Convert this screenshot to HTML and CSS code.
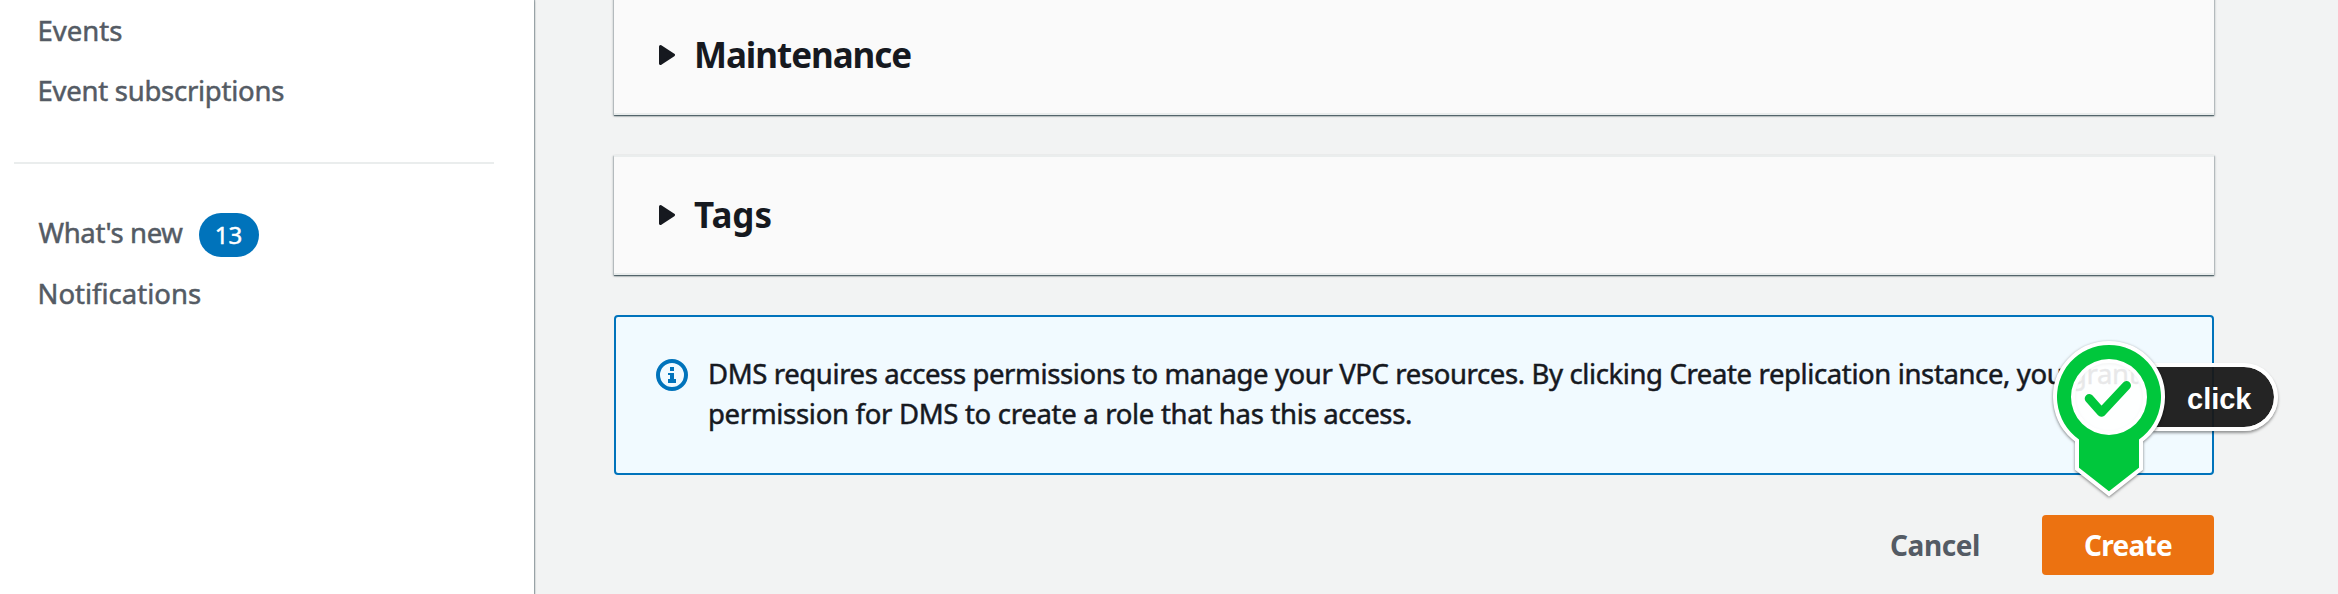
FILE: index.html
```
<!DOCTYPE html>
<html lang="en">
<head>
<meta charset="utf-8">
<title>Create replication instance</title>
<link rel="stylesheet" href="styles.css">
</head>
<body>
<div class="layout">
  <nav class="sidebar">
    <a class="nav-link">Events</a>
    <a class="nav-link nav-link--tight">Event subscriptions</a>
    <hr class="divider">
    <div class="news">
      <a class="nav-link nav-link--news">What's new</a>
      <span class="badge">13</span>
    </div>
    <a class="nav-link">Notifications</a>
  </nav>
  <main class="content">
    <section class="card">
      <svg class="caret" viewBox="0 0 16 20"><path d="M1.5 1.5 14.5 10 1.5 18.5Z"/></svg>
      <h2 class="card-title card-title--tight">Maintenance</h2>
    </section>
    <section class="card">
      <svg class="caret" viewBox="0 0 16 20"><path d="M1.5 1.5 14.5 10 1.5 18.5Z"/></svg>
      <h2 class="card-title">Tags</h2>
    </section>
    <section class="alert">
      <svg class="info" viewBox="0 0 16 16">
        <circle cx="8" cy="8" r="7"/>
        <path d="M7 4h2v2H7zM6 7h3v3h1v2H6v-2h1V8H6z"/>
      </svg>
      <p class="alert-text">DMS requires access permissions to manage your VPC resources. By clicking Create replication instance, you grant<br><span class="alert-line">permission for DMS to create a role that has this access.</span></p>
    </section>
    <div class="actions">
      <button class="btn">Cancel</button>
      <button class="btn btn--primary">Create</button>
    </div>
  </main>
</div>
<div class="callout">
  <span class="callout-label">click</span>
  <svg class="pin" viewBox="0 0 124 156">
    <path class="pin-edge" fill-rule="evenodd" d="M32 101.400A52 52 0 1 1 92 101.400V129.700L62 153.300 32 129.700ZM62 21A38 38 0 1 0 62 97A38 38 0 1 0 62 21Z"/>
    <circle class="pin-face" cx="62" cy="59" r="35"/>
    <path class="pin-fill" fill-rule="evenodd" d="M32 101.400A52 52 0 1 1 92 101.400V129.700L62 153.300 32 129.700ZM62 21A38 38 0 1 0 62 97A38 38 0 1 0 62 21Z"/>
    <path class="pin-check" d="M42.200 60.500 54.400 74.300 79.500 47.500"/>
  </svg>
</div>
</body>
</html>
```
FILE: styles.css
```
* { box-sizing: border-box; }

body {
  margin: 0;
  height: 594px;
  overflow: hidden;
  background: #f2f3f3;
  color: #16191f;
  font-family: "Noto Sans", "Open Sans", sans-serif;
  font-size: 27.5px;
  line-height: 40px;
  position: relative;
}

.layout {
  display: flex;
  height: 594px;
}

.sidebar {
  flex: none;
  width: 534px;
  padding: 11px 39px 0 37.5px;
  background: #fff;
  box-shadow: 1px 0 1px 0 rgba(0, 28, 36, 0.3), 1px 1px 2px 0 rgba(0, 28, 36, 0.15);
  color: #545b64;
}

.nav-link {
  display: block;
  margin-bottom: 20px;
  white-space: nowrap;
  -webkit-text-stroke: 0.5px currentColor;
}

.nav-link--tight { letter-spacing: -0.26px; }

.nav-link--news {
  margin: 0;
  padding-left: 1px;
  letter-spacing: -0.37px;
}

.divider {
  height: 2px;
  margin: 51px 1px 49px -23.5px;
  border: 0;
  background: #eaeded;
}

.news {
  display: flex;
  align-items: flex-start;
  gap: 16px;
  margin-bottom: 17px;
}

.badge {
  width: 60px;
  height: 44px;
  border-radius: 22px;
  background: #0073bb;
  color: #fff;
  font-size: 24px;
  line-height: 44px;
  text-align: center;
  -webkit-text-stroke: 0.5px currentColor;
}

.content {
  flex: none;
  width: 1600px;
  margin: -5px 0 0 80px;
  display: flex;
  flex-direction: column;
  gap: 40px;
}

.card {
  display: flex;
  align-items: center;
  gap: 19px;
  height: 120px;
  padding-left: 45px;
  border-top: 2px solid #eaeded;
  border-bottom: 2px solid #eaeded;
  background: #fafafa;
  box-shadow: 0 1px 1px 0 rgba(0, 28, 36, 0.5), 1px 1px 2px 0 rgba(0, 28, 36, 0.25), -1px 1px 2px 0 rgba(0, 28, 36, 0.25);
}

.caret {
  width: 16px;
  height: 20px;
  fill: #16191f;
  stroke: #16191f;
  stroke-width: 3;
  stroke-linejoin: round;
}

.card-title {
  margin: 0;
  font-size: 35px;
  font-weight: 700;
}

.card-title--tight { letter-spacing: -1.05px; }

.alert {
  display: flex;
  gap: 20px;
  height: 160px;
  padding: 37px 0 0 40px;
  border: 2px solid #0073bb;
  border-radius: 4px;
  background: #f1faff;
}

.info {
  flex: none;
  width: 32px;
  height: 32px;
  margin-top: 5px;
  fill: #0073bb;
}

.info circle {
  fill: none;
  stroke: #0073bb;
  stroke-width: 2;
}

.alert-text {
  margin: 0;
  white-space: nowrap;
  letter-spacing: -0.38px;
  -webkit-text-stroke: 0.5px currentColor;
}

.alert-line { letter-spacing: -0.3px; }

.actions {
  display: flex;
  justify-content: flex-end;
}

.btn {
  height: 60px;
  padding: 0;
  width: 172px;
  border: 0;
  border-radius: 4px;
  background: none;
  color: #545b64;
  font: 700 28px/60px "Noto Sans", "Open Sans", sans-serif;
  letter-spacing: -0.4px;
}

.btn + .btn { margin-left: 21px; }

.btn--primary {
  background: #ec7211;
  color: #fff;
  letter-spacing: -0.75px;
}

/* Callout pin floating over the form */
.callout {
  position: absolute;
  left: 2047px;
  top: 338px;
  width: 232px;
  height: 170px;
}

.callout-label {
  position: absolute;
  left: 106px;
  top: 25px;
  width: 125px;
  height: 68px;
  padding-left: 34px;
  border: 4px solid #fff;
  border-left: 0;
  border-radius: 0 34px 34px 0;
  background: rgba(24, 24, 24, 0.95);
  background-clip: padding-box;
  box-shadow: 0 2px 3px rgba(0, 0, 0, 0.4);
  color: #fff;
  font: 700 29px/64px "Liberation Sans", Arial, sans-serif;
}

.pin {
  position: absolute;
  left: 0;
  top: 0;
  width: 124px;
  height: 156px;
  overflow: visible;
}

.pin-edge {
  fill: #fff;
  stroke: #fff;
  stroke-width: 8;
  filter: drop-shadow(0 1px 1.5px rgba(0, 0, 0, 0.5));
}

.pin-face { fill: rgba(255, 255, 255, 0.9); }
.pin-fill { fill: #00c73c; }

.pin-check {
  fill: none;
  stroke: #00c73c;
  stroke-width: 9;
  stroke-linecap: round;
  stroke-linejoin: round;
}
```
